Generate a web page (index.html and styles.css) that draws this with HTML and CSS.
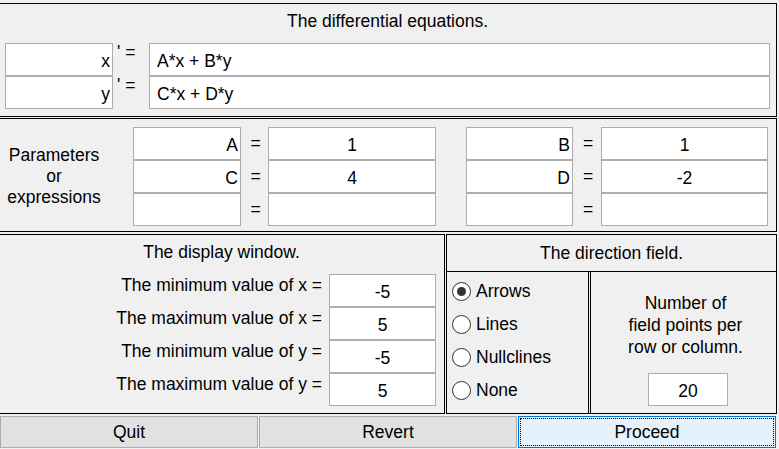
FILE: index.html
```html
<!DOCTYPE html>
<html>
<head>
<meta charset="utf-8">
<title>Phase plane</title>
<link rel="stylesheet" href="styles.css">
</head>
<body>
<div class="app">
  <section class="panel eq">
    <div class="title">The differential equations.</div>
    <div class="eq-grid">
      <input class="box name" value="x">
      <span class="prime">' =</span>
      <input class="box expr" value="A*x + B*y">
      <input class="box name" value="y">
      <span class="prime">' =</span>
      <input class="box expr" value="C*x + D*y">
    </div>
  </section>

  <section class="panel params">
    <div class="param-grid">
      <div class="params-label">Parameters<br>or<br>expressions</div>
      <input class="box name" value="A">
      <span class="eqsign">=</span>
      <input class="box val" value="1">
      <span class="spacer"></span>
      <input class="box name" value="B">
      <span class="eqsign">=</span>
      <input class="box val" value="1">

      <input class="box name" value="C">
      <span class="eqsign">=</span>
      <input class="box val" value="4">
      <span class="spacer"></span>
      <input class="box name" value="D">
      <span class="eqsign">=</span>
      <input class="box val" value="-2">

      <input class="box name" value="">
      <span class="eqsign">=</span>
      <input class="box val" value="">
      <span class="spacer"></span>
      <input class="box name" value="">
      <span class="eqsign">=</span>
      <input class="box val" value="">
    </div>
  </section>

  <div class="lower">
    <section class="panel display">
      <div class="title">The display window.</div>
      <div class="win-grid">
        <span class="win-label">The minimum value of x =</span>
        <input class="box val" value="-5">
        <span class="win-label">The maximum value of x =</span>
        <input class="box val" value="5">
        <span class="win-label">The minimum value of y =</span>
        <input class="box val" value="-5">
        <span class="win-label">The maximum value of y =</span>
        <input class="box val" value="5">
      </div>
    </section>

    <section class="panel direction">
      <div class="dir-title">The direction field.</div>
      <div class="dir-body">
        <div class="radios">
          <label class="radio"><span class="dot on"></span>Arrows</label>
          <label class="radio"><span class="dot"></span>Lines</label>
          <label class="radio"><span class="dot"></span>Nullclines</label>
          <label class="radio"><span class="dot"></span>None</label>
        </div>
        <div class="points">
          <div class="points-text">Number of<br>field points per<br>row or column.</div>
          <input class="box val count" value="20">
        </div>
      </div>
    </section>
  </div>

  <div class="buttons">
    <button class="btn">Quit</button>
    <button class="btn">Revert</button>
    <button class="btn primary">Proceed</button>
  </div>
</div>
</body>
</html>
```

FILE: styles.css
```css
* { box-sizing: border-box; }

html, body {
  margin: 0;
  padding: 0;
  background: #f0f0f0;
  overflow: hidden;
}

body {
  font-family: "Liberation Sans", Arial, sans-serif;
  font-size: 17.5px;
  color: #000;
}

.app {
  width: 779px;
  height: 449px;
  padding-top: 3px;
}

.panel {
  border: 1px solid #000;
  background: #f0f0f0;
}

.eq,
.params {
  margin-left: -2px;
  width: 779px;
  height: 114px;
}

.params { margin-top: 1px; }

.title {
  text-align: center;
  line-height: 20px;
  height: 39px;
  padding-top: 7px;
}

.box {
  display: block;
  height: 33px;
  margin: 0;
  border: 1px solid #adadad;
  background: #fff;
  font: inherit;
  color: #000;
  padding: 4px 2px 0 2px;
  outline: none;
  width: 100%;
}

.name { text-align: right; }
.val { text-align: center; }
.expr { text-align: left; padding-left: 7px; }

.eq-grid {
  display: grid;
  grid-template-columns: 108px 36px 621px;
  grid-auto-rows: 33px;
  padding-left: 6px;
}

.prime {
  padding-left: 4px;
  line-height: 18px;
  white-space: pre;
}

.param-grid {
  display: grid;
  grid-template-columns: 134px 108px 27px 168px 30px 107px 28px 167px;
  grid-template-rows: repeat(3, 33px);
  padding-top: 8px;
}

.params-label {
  grid-row: 1 / span 3;
  grid-column: 1;
  text-align: center;
  line-height: 21px;
  padding-top: 18px;
  padding-right: 24px;
}

.spacer { display: block; }

.eqsign {
  display: flex;
  align-items: center;
  justify-content: center;
  padding-left: 2px;
}

.lower {
  display: flex;
  gap: 1px;
  margin-top: 2px;
  height: 180px;
}

.display {
  margin-left: -2px;
  width: 447px;
}

.win-grid {
  display: grid;
  grid-template-columns: 1fr 107px;
  grid-auto-rows: 33px;
  column-gap: 7px;
  padding-right: 8px;
}

.win-label {
  text-align: right;
  line-height: 20px;
  padding-top: 1px;
}

.direction {
  width: 331px;
  display: flex;
  flex-direction: column;
}

.dir-title {
  height: 37px;
  border-bottom: 1px solid #000;
  text-align: center;
  line-height: 20px;
  padding-top: 8px;
}

.dir-body {
  flex: 1;
  display: flex;
  gap: 1px;
}

.radios {
  width: 142px;
  border-right: 1px solid #000;
  padding: 3px 0 0 5px;
}

.radio {
  display: flex;
  align-items: center;
  height: 33px;
  gap: 5px;
}

.dot {
  width: 19px;
  height: 19px;
  border-radius: 50%;
  border: 1px solid #333;
  background: #fff;
  display: flex;
  align-items: center;
  justify-content: center;
  flex: none;
}

.dot.on::after {
  content: "";
  width: 9px;
  height: 9px;
  border-radius: 50%;
  background: #333;
}

.points {
  flex: 1;
  border-left: 1px solid #000;
  display: flex;
  flex-direction: column;
  align-items: center;
  padding-top: 20px;
  padding-left: 4px;
}

.points-text {
  text-align: center;
  line-height: 22px;
}

.count {
  width: 80px;
  margin-top: 15px;
  margin-left: 5px;
}

.buttons {
  display: flex;
  gap: 1px;
  margin-top: 2px;
}

.btn {
  width: 258px;
  height: 32px;
  border: 1px solid #adadad;
  background: #e1e1e1;
  font: inherit;
  color: #000;
  padding: 0;
  margin: 0;
}

.btn.primary {
  border-color: #0078d7;
  background: #e5f1fb;
  outline: 1px dotted #000;
  outline-offset: -3px;
}
```
